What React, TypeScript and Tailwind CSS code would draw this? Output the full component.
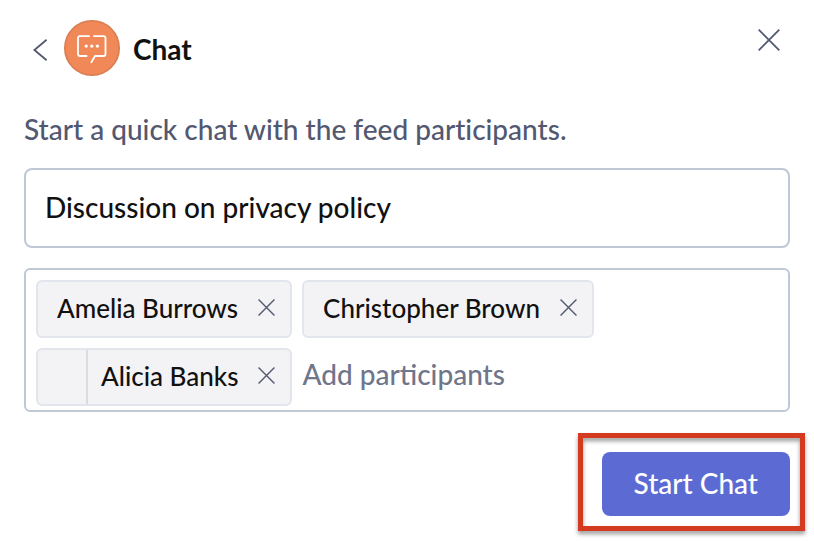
import React, { useState } from 'react';

interface Participant {
  id: number;
  name: string;
  hasPhoto?: boolean;
}

const INITIAL_PARTICIPANTS: Participant[] = [
  { id: 1, name: 'Amelia Burrows' },
  { id: 2, name: 'Christopher Brown' },
  { id: 3, name: 'Alicia Banks', hasPhoto: true },
];

const CrossIcon: React.FC<{ className?: string; strokeWidth: number }> = ({ className, strokeWidth }) => (
  <svg viewBox="0 0 22 22" fill="none" stroke="currentColor" strokeWidth={strokeWidth} className={className} aria-hidden="true">
    <path d="M0.7 0.7 L21.3 21.3 M21.3 0.7 L0.7 21.3" />
  </svg>
);

const ChatLogo: React.FC = () => (
  <svg viewBox="0 0 56 56" fill="none" className="h-14 w-14 shrink-0" aria-hidden="true">
    <circle cx="28" cy="28" r="27.2" fill="#f18858" stroke="#d97c50" strokeWidth="1.6" />
    <g stroke="#fff" strokeWidth="1.8" strokeLinecap="round" strokeLinejoin="round">
      <path d="M25 16.2 H16 Q14 16.2 14 18.2 V34 Q14 36 16 36 H22.6" />
      <path d="M30 16.2 H39.5 Q41.5 16.2 41.5 18.2 V34 Q41.5 36 39.5 36 H31 L27.4 42.2" />
    </g>
    <g fill="#fff">
      <circle cx="22.2" cy="26.1" r="1.7" />
      <circle cx="27.8" cy="26.1" r="1.7" />
      <circle cx="33.4" cy="26.1" r="1.7" />
    </g>
  </svg>
);

interface ChipProps {
  participant: Participant;
  onRemove: (id: number) => void;
}

const Chip: React.FC<ChipProps> = ({ participant, onRemove }) => (
  <li className="flex h-[58px] items-stretch rounded-md border-2 border-[#e2e6ec] bg-[#f3f3f5]">
    {participant.hasPhoto && <span className="w-[50px] border-r-2 border-[#d8dbe0]" />}
    <span className={`flex items-center pb-[2px] text-[26px] leading-8 font-medium text-[#111] ${participant.hasPhoto ? 'pl-[13px]' : 'pl-[19px]'}`}>
      {participant.name}
    </span>
    <button
      type="button"
      aria-label={`Remove ${participant.name}`}
      onClick={() => onRemove(participant.id)}
      className="flex items-center pr-[15px] pb-1 pl-5 text-[#525870]"
    >
      <CrossIcon className="h-[17px] w-[17px]" strokeWidth={1.8} />
    </button>
  </li>
);

export default function App() {
  const [title, setTitle] = useState('Discussion on privacy policy');
  const [participants, setParticipants] = useState(INITIAL_PARTICIPANTS);
  const [query, setQuery] = useState('');

  const removeParticipant = (id: number) => {
    setParticipants((list) => list.filter((p) => p.id !== id));
  };

  return (
    <main className="min-h-screen bg-white px-6 pt-5 pb-6 font-[Lato,sans-serif] text-[#111]">
      <header className="flex items-center">
        <button type="button" aria-label="Back" className="flex h-14 w-10 items-center pt-1 pl-[9px] text-[#525870]">
          <svg viewBox="0 0 15 22" fill="none" stroke="currentColor" strokeWidth="1.8" className="h-[22px] w-[15px]" aria-hidden="true">
            <path d="M13.6 0.8 L1.4 11 L13.6 21.2" />
          </svg>
        </button>
        <ChatLogo />
        <h1 className="pt-[2px] pl-[13px] text-[28px] leading-8 font-bold">Chat</h1>
        <button type="button" aria-label="Close" className="ml-auto self-start py-[9px] pr-[10px] pl-[9px] text-[#525870]">
          <CrossIcon className="h-[22px] w-[22px]" strokeWidth={1.8} />
        </button>
      </header>

      <form onSubmit={(e) => e.preventDefault()}>
        <p className="mt-[35px] text-[28px] leading-9 font-medium text-[#525870] [font-variant-ligatures:none]">
          Start a quick chat with the feed participants.
        </p>

        <input
          aria-label="Chat title"
          value={title}
          onChange={(e) => setTitle(e.target.value)}
          className="mt-[21px] block h-20 w-full rounded-lg border-2 border-[#bfc8d4] px-[19px] pb-[2px] text-[28px] font-medium outline-none"
        />

        <ul className="mt-5 flex flex-wrap gap-[10px] rounded-md border-2 border-[#bfc8d4] px-[10px] pt-[10px] pb-1">
          {participants.map((p) => (
            <Chip key={p.id} participant={p} onRemove={removeParticipant} />
          ))}
          <li className="min-w-56 flex-1">
            <input
              aria-label="Add participants"
              placeholder="Add participants"
              value={query}
              onChange={(e) => setQuery(e.target.value)}
              className="h-[52px] w-full bg-transparent text-[28px] font-medium outline-none placeholder:text-[#6f768b]"
            />
          </li>
        </ul>

        <div className="mt-10 flex justify-end">
          <div className="relative">
            <button type="submit" className="h-16 rounded-lg bg-[#5b6bd3] px-8 pb-[2px] text-[28px] leading-8 font-medium text-white">
              Start Chat
            </button>
            {/* highlight frame around the action */}
            <span className="pointer-events-none absolute -top-[19px] -right-[15px] -bottom-[15px] -left-6 border-[5px] border-[#d43a20] drop-shadow-[0_3px_2px_rgba(0,0,0,0.4)]" />
          </div>
        </div>
      </form>
    </main>
  );
}
